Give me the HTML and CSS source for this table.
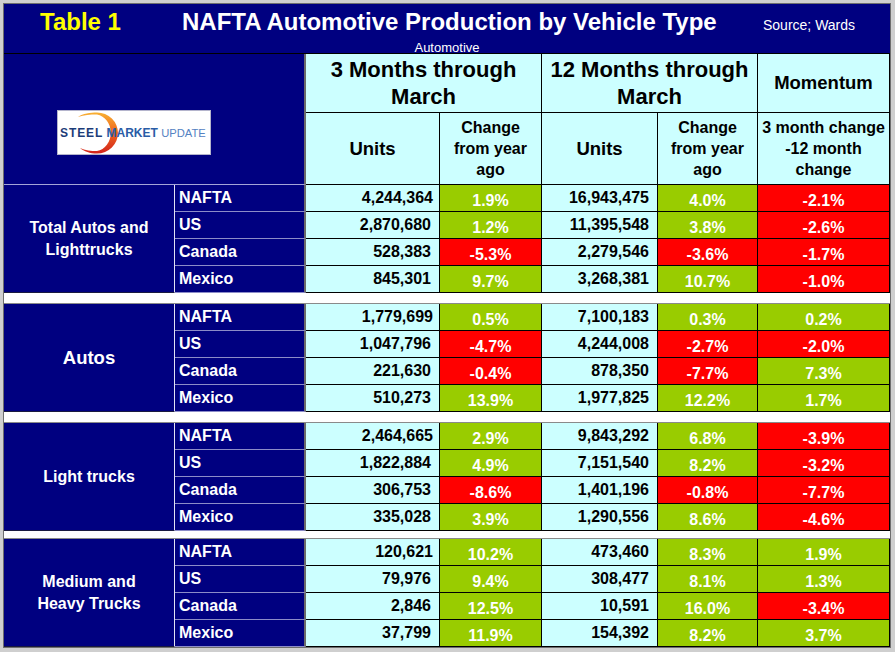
FILE: index.html
```html
<!DOCTYPE html>
<html lang="en">
<head>
<meta charset="utf-8">
<title>NAFTA Automotive Production by Vehicle Type</title>
<link rel="stylesheet" href="styles.css">
</head>
<body>
<div class="frame">
  <div class="title-bar">
    <div class="title-row">
      <span class="t-num">Table 1</span>
      <span class="t-main">NAFTA Automotive Production by Vehicle Type</span>
      <span class="t-src">Source; Wards</span>
    </div>
    <div class="t-sub">Automotive</div>
  </div>

  <div class="head">
    <div class="logo-cell">
      <div class="logo">
        <svg class="logo-arc" width="152" height="43" viewBox="0 0 152 43">
          <defs>
            <linearGradient id="arcg" x1="0" y1="0" x2="0" y2="1">
              <stop offset="0" stop-color="#f8b133"/>
              <stop offset="0.45" stop-color="#f06a1e"/>
              <stop offset="1" stop-color="#d2231d"/>
            </linearGradient>
          </defs>
          <path d="M20 6 C25 2.5 32 1.5 39 1.5 A21 20.5 0 0 1 39 42.5 C32 42.5 26 40.5 22 37 C27 39.5 33 40 39 40 A16.5 18.5 0 0 0 39 3.5 C32 3.5 26 4 20 6 Z" fill="url(#arcg)"/>
        </svg>
        <span class="logo-text"><b class="l-steel">STEEL</b> <b class="l-market">MARKET</b> <span class="l-update">UPDATE</span></span>
      </div>
    </div>
    <div class="hc h-period">3 Months through<br>March</div>
    <div class="hc h-period">12 Months through<br>March</div>
    <div class="hc h-big">Momentum</div>
    <div class="hc h-big">Units</div>
    <div class="hc h-small">Change<br>from year<br>ago</div>
    <div class="hc h-big">Units</div>
    <div class="hc h-small">Change<br>from year<br>ago</div>
    <div class="hc h-small">3 month change<br>-12 month<br>change</div>
  </div>

  <div class="group">
    <div class="g-label">Total Autos and<br>Lighttrucks</div>
    <div class="country">NAFTA</div><div class="units tight">4,244,364</div><div class="pct up">1.9%</div><div class="units">16,943,475</div><div class="pct up">4.0%</div><div class="pct down">-2.1%</div>
    <div class="country">US</div><div class="units">2,870,680</div><div class="pct up">1.2%</div><div class="units">11,395,548</div><div class="pct up">3.8%</div><div class="pct down">-2.6%</div>
    <div class="country">Canada</div><div class="units">528,383</div><div class="pct down">-5.3%</div><div class="units">2,279,546</div><div class="pct down">-3.6%</div><div class="pct down">-1.7%</div>
    <div class="country">Mexico</div><div class="units">845,301</div><div class="pct up">9.7%</div><div class="units">3,268,381</div><div class="pct up">10.7%</div><div class="pct down">-1.0%</div>
  </div>
  <div class="gap gap-wide"></div>

  <div class="group">
    <div class="g-label big">Autos</div>
    <div class="country">NAFTA</div><div class="units tight">1,779,699</div><div class="pct up">0.5%</div><div class="units">7,100,183</div><div class="pct up">0.3%</div><div class="pct up">0.2%</div>
    <div class="country">US</div><div class="units">1,047,796</div><div class="pct down">-4.7%</div><div class="units">4,244,008</div><div class="pct down">-2.7%</div><div class="pct down">-2.0%</div>
    <div class="country">Canada</div><div class="units">221,630</div><div class="pct down">-0.4%</div><div class="units">878,350</div><div class="pct down">-7.7%</div><div class="pct up">7.3%</div>
    <div class="country">Mexico</div><div class="units">510,273</div><div class="pct up">13.9%</div><div class="units">1,977,825</div><div class="pct up">12.2%</div><div class="pct up">1.7%</div>
  </div>
  <div class="gap gap-wide"></div>

  <div class="group">
    <div class="g-label">Light trucks</div>
    <div class="country">NAFTA</div><div class="units tight">2,464,665</div><div class="pct up">2.9%</div><div class="units">9,843,292</div><div class="pct up">6.8%</div><div class="pct down">-3.9%</div>
    <div class="country">US</div><div class="units">1,822,884</div><div class="pct up">4.9%</div><div class="units">7,151,540</div><div class="pct up">8.2%</div><div class="pct down">-3.2%</div>
    <div class="country">Canada</div><div class="units">306,753</div><div class="pct down">-8.6%</div><div class="units">1,401,196</div><div class="pct down">-0.8%</div><div class="pct down">-7.7%</div>
    <div class="country">Mexico</div><div class="units">335,028</div><div class="pct up">3.9%</div><div class="units">1,290,556</div><div class="pct up">8.6%</div><div class="pct down">-4.6%</div>
  </div>
  <div class="gap gap-narrow"></div>

  <div class="group">
    <div class="g-label">Medium and<br>Heavy Trucks</div>
    <div class="country">NAFTA</div><div class="units tight">120,621</div><div class="pct up">10.2%</div><div class="units">473,460</div><div class="pct up">8.3%</div><div class="pct up">1.9%</div>
    <div class="country">US</div><div class="units">79,976</div><div class="pct up">9.4%</div><div class="units">308,477</div><div class="pct up">8.1%</div><div class="pct up">1.3%</div>
    <div class="country">Canada</div><div class="units">2,846</div><div class="pct up">12.5%</div><div class="units">10,591</div><div class="pct up">16.0%</div><div class="pct down">-3.4%</div>
    <div class="country">Mexico</div><div class="units">37,799</div><div class="pct up">11.9%</div><div class="units">154,392</div><div class="pct up">8.2%</div><div class="pct up">3.7%</div>
  </div>
</div>
</body>
</html>
```

FILE: styles.css
```css
* { box-sizing: border-box; }

html, body { height: 100%; }

body {
  margin: 0;
  padding: 3px 4px 0 3px;
  background: #cfcfcf;
  font-family: "Liberation Sans", Arial, sans-serif;
  overflow: hidden;
}

.frame {
  width: 888px;
  border: 1px solid #6e6e6e;
  background: #ffffff;
}

/* Title bar */
.title-bar {
  height: 50px;
  background: #000080;
  border-bottom: 1px solid #000000;
  color: #ffffff;
}

.title-row {
  display: grid;
  grid-template-columns: 178px 581px 1fr;
  align-items: baseline;
  padding-top: 4px;
  line-height: 28px;
  white-space: nowrap;
}

.t-num {
  padding-left: 36px;
  color: #ffff00;
  font-size: 24px;
  font-weight: bold;
}

.t-main {
  font-size: 24px;
  font-weight: bold;
}

.t-src {
  font-size: 14px;
}

.t-sub {
  margin-top: 2px;
  text-align: center;
  font-size: 13px;
  line-height: 14px;
}

/* Header */
.head,
.group {
  display: grid;
  grid-template-columns: 171px 131px 134px 102px 116px 100px 132px;
}

.head {
  grid-template-rows: 59px 72px;
}

.logo-cell {
  grid-column: 1 / 3;
  grid-row: 1 / 3;
  background: #000080;
  border-right: 2px solid #6a6a6a;
  border-bottom: 1px solid #a4a4d8;
  padding: 56px 0 0 53px;
}

.logo {
  position: relative;
  width: 154px;
  height: 45px;
  background: #ffffff;
  border: 1px solid #b4b4cc;
}

.logo-arc {
  position: absolute;
  left: 0;
  top: 0;
}

.logo-text {
  position: relative;
  display: block;
  padding: 15px 0 0 2px;
  font-size: 12px;
  line-height: 14px;
  white-space: nowrap;
}

.l-steel {
  color: #1c3c78;
  letter-spacing: 0.9px;
}

.l-market {
  color: #2a5ca6;
  letter-spacing: 0;
}

.l-update {
  color: #5482c2;
  font-size: 11.2px;
}

.hc {
  display: flex;
  align-items: center;
  justify-content: center;
  text-align: center;
  background: #ccffff;
  border-right: 1px solid #000000;
  border-bottom: 1px solid #000000;
  color: #000000;
  font-weight: bold;
}

.h-period {
  grid-column: span 2;
  font-size: 22px;
  line-height: 27px;
}

.h-big {
  font-size: 18.5px;
}

.h-small {
  font-size: 16px;
  line-height: 21px;
}

/* Data groups */
.group {
  grid-template-rows: repeat(4, 27px);
  font-size: 16px;
  font-weight: bold;
}

.g-label {
  grid-row: 1 / 5;
  display: flex;
  align-items: center;
  justify-content: center;
  text-align: center;
  background: #000080;
  color: #ffffff;
  line-height: 22px;
  border-right: 1px solid #e2e2f4;
  border-bottom: 1px solid #1a1a40;
}

.g-label.big {
  font-size: 18.5px;
}

.country {
  background: #000080;
  color: #ffffff;
  padding-left: 4px;
  line-height: 26px;
  border-right: 2px solid #6a6a6a;
  border-bottom: 1px solid #8c8cc8;
}

.units {
  background: #ccffff;
  color: #000000;
  text-align: right;
  padding-right: 8px;
  line-height: 26px;
  border-right: 1px solid #000000;
  border-bottom: 1px solid #000000;
}

.units.tight {
  padding-right: 6px;
}

.pct {
  color: #ffffff;
  text-align: center;
  padding-top: 6px;
  line-height: 19px;
  border-right: 1px solid #000000;
  border-bottom: 1px solid #000000;
}

.up {
  background: #99cc00;
}

.down {
  background: #ff0000;
}

.gap {
  height: 10px;
  background: #ffffff;
  border-bottom: 1px solid #8a8a8a;
}

.gap-wide {
  height: 11px;
}

.gap-narrow {
  height: 8px;
}
```
